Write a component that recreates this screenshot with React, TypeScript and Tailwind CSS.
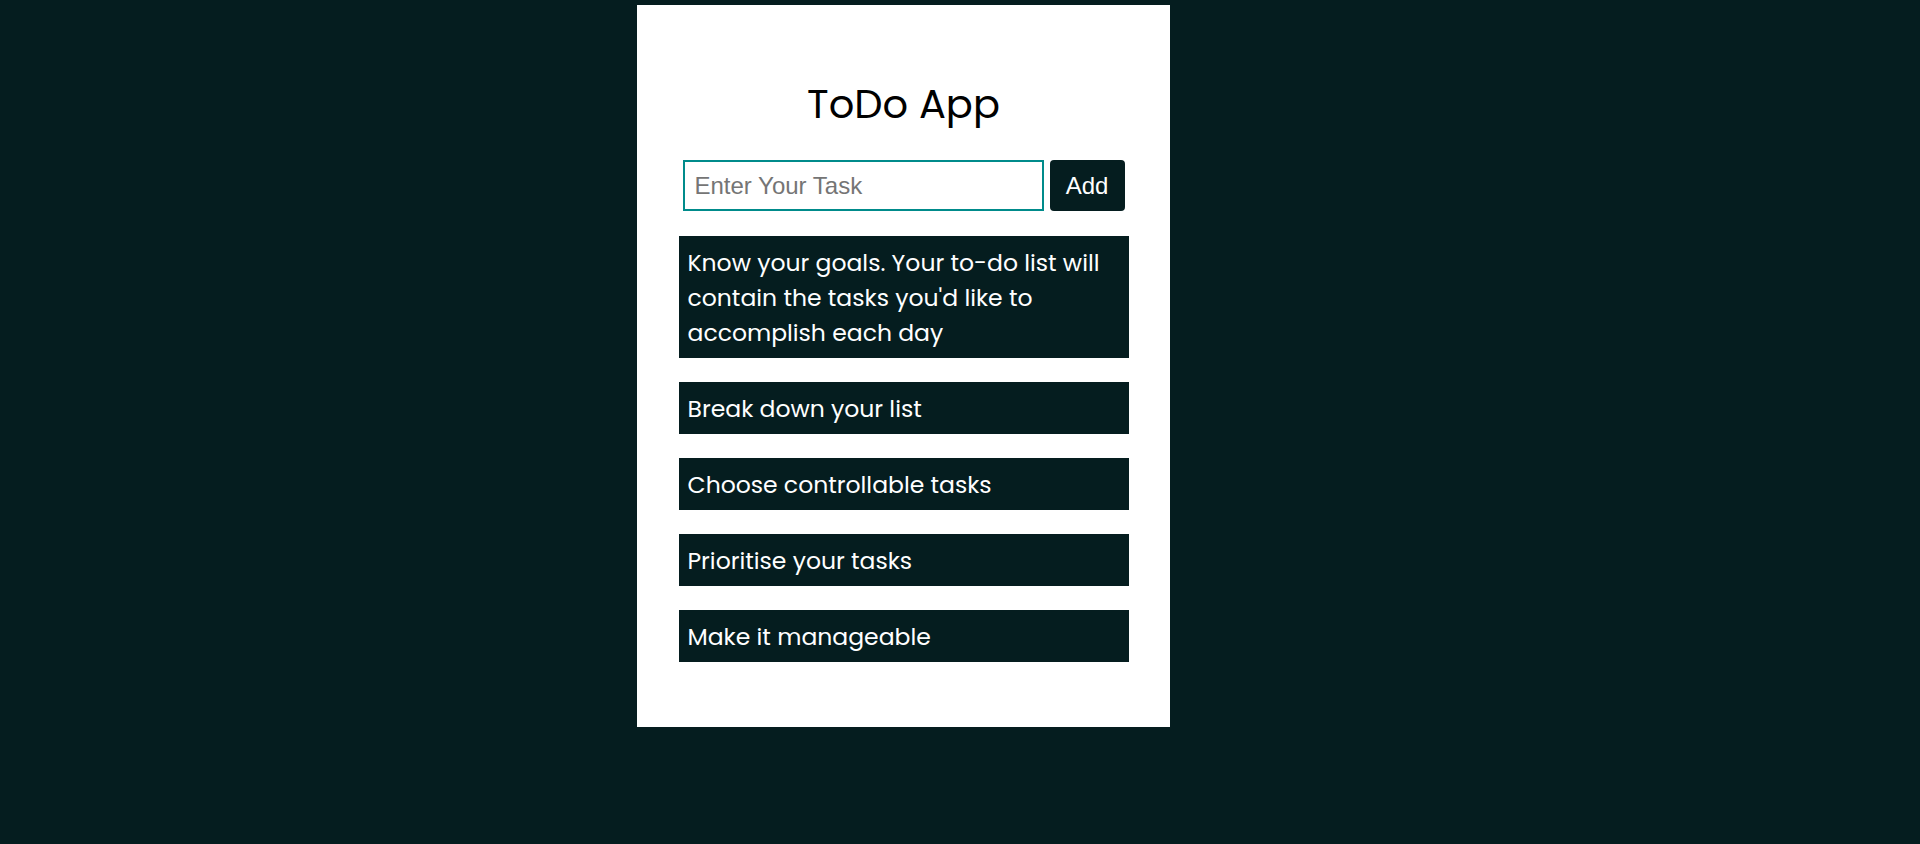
import React from 'react';

const tasks: string[] = [
  "Know your goals. Your to-do list will contain the tasks you'd like to accomplish each day",
  'Break down your list',
  'Choose controllable tasks',
  'Prioritise your tasks',
  'Make it manageable',
];

const App = () => {
  return (
    <div className="min-h-screen bg-[#051d1f] pt-[5px] pl-[637px]">
      <div className="w-[533px] bg-white pt-[71px] pb-[65px] flex flex-col items-center">
        {/* Tytuł */}
        <h1 className="text-[40px] leading-[56px] text-black font-['Poppins','Inter',sans-serif]">
          ToDo App
        </h1>

        {/* Formularz */}
        <div className="mt-[28px] flex gap-[6px]">
          <input
            type="text"
            placeholder="Enter Your Task"
            className="w-[361px] h-[51px] border-2 border-[#008b8b] px-[10px] text-[24px] font-['Liberation_Sans',Arial,sans-serif] outline-none placeholder:text-[#757575]"
          />
          <button className="w-[75px] h-[51px] rounded-[4px] bg-[#051d1f] text-white text-[24px] font-['Liberation_Sans',Arial,sans-serif]">
            Add
          </button>
        </div>

        {/* Lista zadań */}
        <ul className="mt-[25px] w-[450px] flex flex-col gap-[24px]">
          {tasks.map((task, i) => (
            <li
              key={i}
              className="bg-[#051d1f] text-white px-[9px] py-[8.5px] text-[23.5px] leading-[35px] font-['Poppins','Inter',sans-serif]"
            >
              {task}
            </li>
          ))}
        </ul>
      </div>
    </div>
  );
};

export default App;
